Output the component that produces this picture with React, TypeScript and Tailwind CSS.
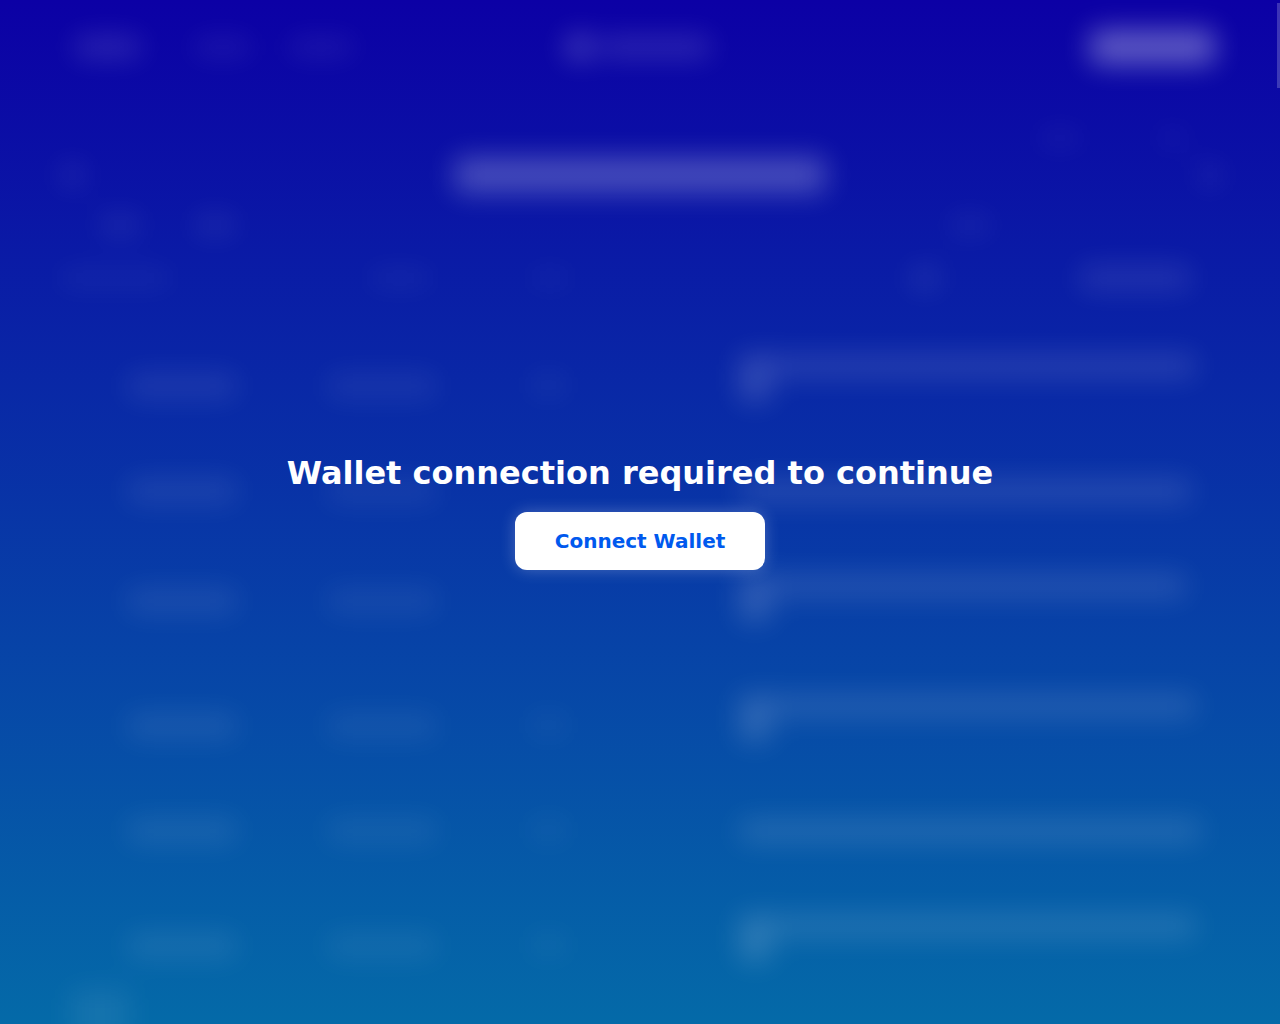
const leftRows = [
  { h: "h-[105px]", third: true },
  { h: "h-[110px]", third: false },
  { h: "h-[125px]", third: false },
  { h: "h-[105px]", third: true },
  { h: "h-[115px]", third: true },
  { h: "h-[90px]", third: true },
];

const rightRows = [
  { h: "h-[125px]", icon: true, w: "w-[425px]" },
  { h: "h-[95px]", icon: false, w: "w-[450px]" },
  { h: "h-[120px]", icon: true, w: "w-[415px]" },
  { h: "h-[125px]", icon: true, w: "w-[425px]" },
  { h: "h-[95px]", icon: false, w: "w-[460px]" },
  { h: "h-[90px]", icon: true, w: "w-[425px]" },
];

function BlurredPage() {
  return (
    <div className="flex flex-col blur-[14px]">
      {/* Header */}
      <div className="flex h-[96px] items-center justify-between pl-[75px] pr-[65px] pb-[2px]">
        <div className="flex w-[286px] items-center">
          <div className="h-[20px] w-[65px] rounded bg-white/[0.14]" />
          <div className="ml-[55px] h-[16px] w-[55px] rounded bg-white/[0.09]" />
          <div className="ml-[40px] h-[16px] w-[62px] rounded bg-white/[0.09]" />
        </div>
        <div className="flex items-center gap-2">
          <div className="h-[26px] w-[26px] rounded-full bg-white/[0.25]" />
          <div className="h-[20px] w-[110px] rounded bg-white/[0.15]" />
        </div>
        <div className="flex w-[300px] justify-end">
          <div className="h-[34px] w-[125px] rounded-lg bg-white/[0.35]" />
        </div>
      </div>

      {/* Top right links */}
      <div className="mt-[34px] flex h-[20px] justify-end pr-[95px]">
        <div className="h-[16px] w-[40px] rounded bg-white/[0.06]" />
        <div className="ml-[80px] h-[16px] w-[25px] rounded bg-white/[0.06]" />
      </div>

      {/* Title */}
      <div className="mt-[5px] flex h-[40px] items-center pl-[60px]">
        <div className="h-[24px] w-[25px] rounded bg-white/[0.08]" />
        <div className="ml-[370px] h-[34px] w-[370px] rounded bg-white/[0.26]" />
        <div className="ml-[375px] h-[24px] w-[20px] rounded bg-white/[0.08]" />
      </div>

      {/* Tabs */}
      <div className="mt-[20px] flex h-[20px] pl-[100px]">
        <div className="h-[20px] w-[40px] rounded bg-white/[0.08]" />
        <div className="ml-[55px] h-[20px] w-[40px] rounded bg-white/[0.08]" />
        <div className="ml-[715px] h-[20px] w-[40px] rounded bg-white/[0.06]" />
      </div>

      {/* Column headings */}
      <div className="mt-[30px] flex h-[25px] items-center pl-[60px]">
        <div className="h-[18px] w-[110px] rounded bg-white/[0.05]" />
        <div className="ml-[200px] h-[18px] w-[60px] rounded bg-white/[0.05]" />
        <div className="ml-[100px] h-[18px] w-[40px] rounded bg-white/[0.04]" />
        <div className="ml-[340px] h-[24px] w-[30px] rounded bg-white/[0.08]" />
        <div className="ml-[140px] h-[24px] w-[110px] rounded bg-white/[0.1]" />
      </div>

      {/* Content */}
      <div className="mt-[84px] flex">
        <div className="flex w-[740px] flex-col pl-[128px]">
          {leftRows.map((row, i) => (
            <div key={i} className={`flex ${row.h} items-start`}>
              <div className="h-[24px] w-[108px] rounded bg-white/[0.09]" />
              <div className="ml-[92px] h-[24px] w-[108px] rounded bg-white/[0.07]" />
              {row.third && <div className="ml-[95px] h-[22px] w-[35px] rounded bg-white/[0.05]" />}
            </div>
          ))}
        </div>
        <div className="-mt-[19px] flex flex-1 flex-col">
          {rightRows.map((row, i) => (
            <div key={i} className={`flex ${row.h} items-start`}>
              {row.icon && <div className="h-[46px] w-[30px] rounded bg-white/[0.17]" />}
              <div className={`h-[22px] ${row.w} rounded bg-white/[0.13]`} />
            </div>
          ))}
        </div>
      </div>

      {/* Footer block */}
      <div className="-mt-[35px] ml-[70px] h-[50px] w-[60px] rounded bg-white/[0.07]" />
    </div>
  );
}

export default function App() {
  return (
    <div className="relative h-screen w-full overflow-hidden bg-linear-to-b/srgb from-[#0c00a5] to-[#046aa8] font-['DejaVu_Sans',sans-serif]">
      <BlurredPage />

      {/* Scrollbar thumb */}
      <div className="absolute right-0 top-[3px] h-[85px] w-[3px] bg-white/20" />

      {/* Wallet gate */}
      <div className="absolute inset-0 flex flex-col items-center justify-center pb-[6px]">
        <h1 className="text-[32px] font-bold leading-[50px] text-white">
          Wallet connection required to continue
        </h1>
        <button className="mt-[14px] h-[58px] w-[250px] rounded-xl bg-white text-[20px] font-bold text-[#0059ee] shadow-[0_0_16px_rgba(255,255,255,0.25)]">
          Connect Wallet
        </button>
      </div>
    </div>
  );
}
